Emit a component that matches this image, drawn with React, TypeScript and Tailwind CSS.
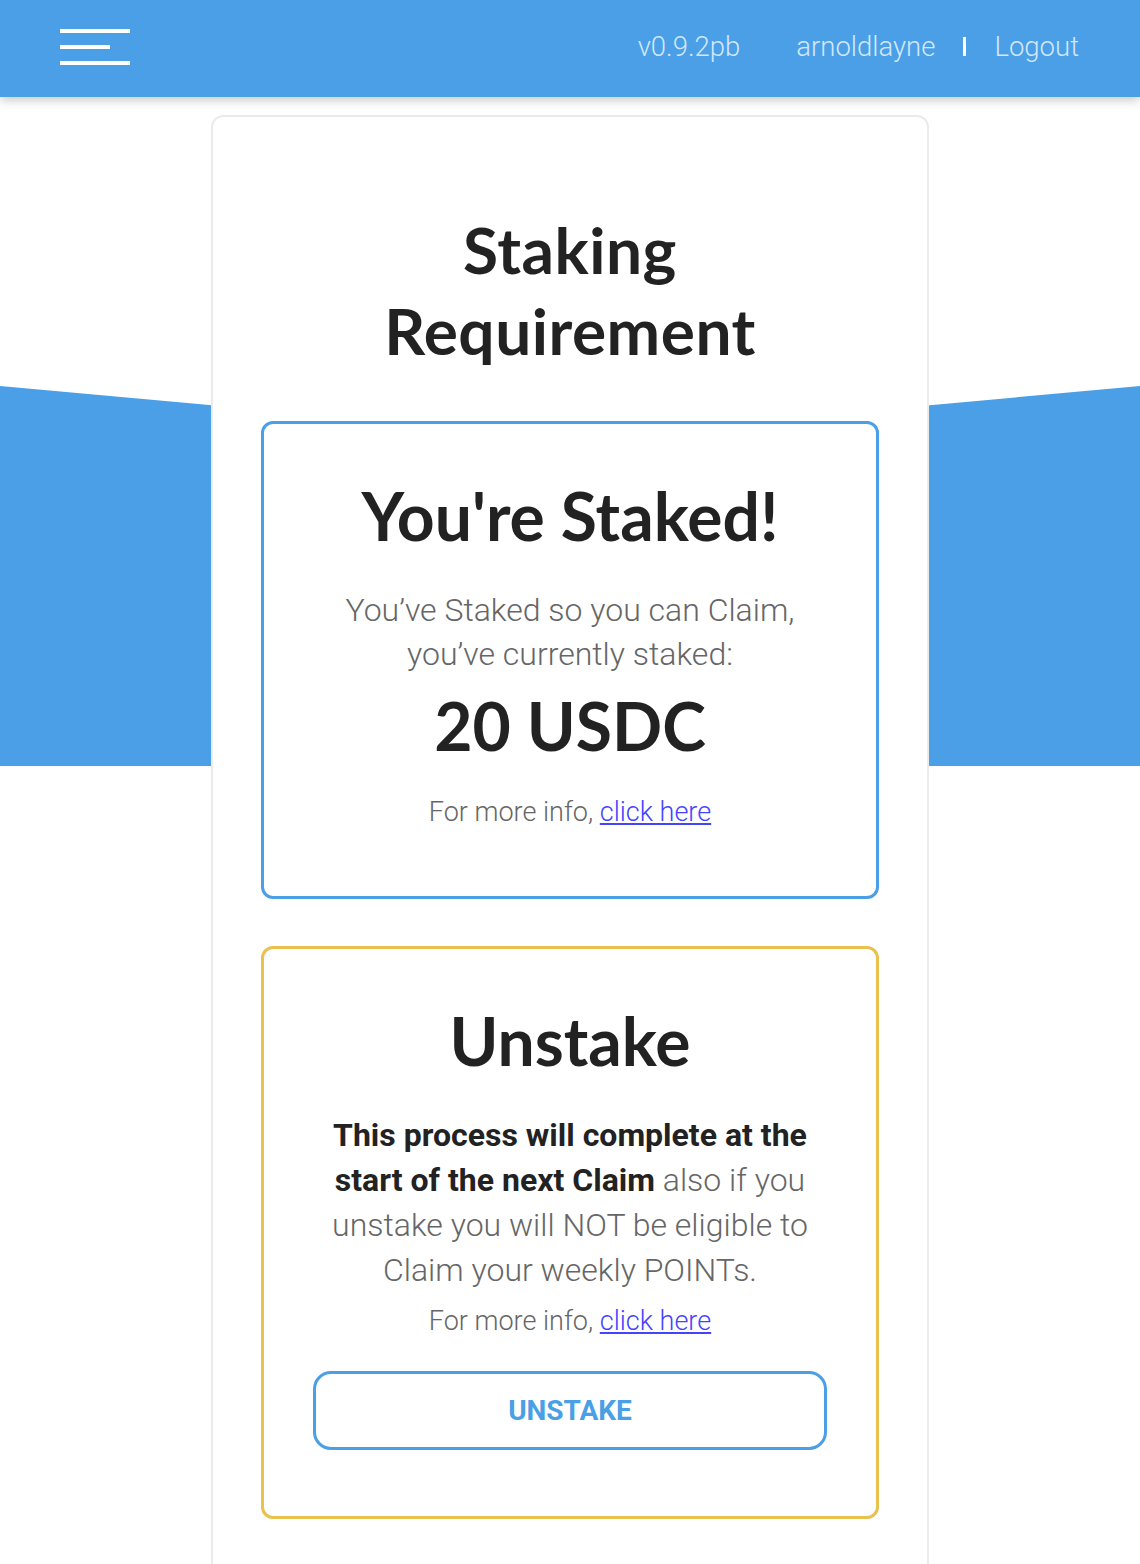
export default function App() {
  return (
    <div className="relative min-h-screen bg-white font-['Roboto',sans-serif] text-[#222]">
      <header className="relative z-20 flex h-[97px] items-center justify-between bg-[#4a9fe6] pb-[4px] pl-[60px] pr-[61px] shadow-[0_3px_10px_rgba(0,0,0,0.22)]">
        <button className="flex flex-col gap-[12px]">
          <span className="block h-[4px] w-[70px] bg-white" />
          <span className="block h-[4px] w-[50px] bg-white" />
          <span className="block h-[4px] w-[70px] bg-white" />
        </button>
        <nav className="flex items-center text-[27.5px] font-light text-[#d2e7fb]">
          <span>v0.9.2pb</span>
          <span className="ml-[56px]">arnoldlayne</span>
          <span className="mx-[28px] block h-[19px] w-[3px] bg-white" />
          <span>Logout</span>
        </nav>
      </header>

      {/* angled blue band behind the card */}
      <div className="absolute left-0 right-0 top-[386px] z-0 h-[380px] bg-[#4a9fe6] [clip-path:polygon(0_0,50%_52px,100%_0,100%_100%,0_100%)]" />

      <main className="relative z-10 mx-auto mt-[18px] w-[718px] rounded-[12px] border-2 border-[#ebebeb] bg-white px-[48px] pb-[60px] pt-[92px]">
        <h1 className="text-center font-['Lato',sans-serif] text-[64px] font-bold leading-[81px] tracking-[0.5px] text-[#222]">
          Staking
          <br />
          Requirement
        </h1>

        <section className="mt-[50px] rounded-[12px] border-[3px] border-[#4a9fe6] px-[30px] pb-[64px] pt-[52px] text-center">
          <h2 className="font-['Lato',sans-serif] text-[66px] font-bold leading-[80px] text-[#222]">
            You're Staked!
          </h2>
          <p className="mt-[32px] text-[32px] font-light leading-[44px] text-[#666]">
            You’ve Staked so you can Claim,
            <br />
            you’ve currently staked:
          </p>
          <p className="mt-[10px] font-['Lato',sans-serif] text-[66px] font-bold leading-[80px] text-[#222]">
            20 USDC
          </p>
          <p className="mt-[26px] text-[27px] font-light leading-[40px] text-[#666]">
            For more info,{' '}
            <a href="#" className="text-[#4444ff] underline">
              click here
            </a>
          </p>
        </section>

        <section className="mt-[47px] rounded-[12px] border-[3px] border-[#e9c14f] px-[49px] pb-[66px] pt-[52px] text-center">
          <h2 className="font-['Lato',sans-serif] text-[66px] font-bold leading-[80px] text-[#222]">
            Unstake
          </h2>
          <p className="mt-[32px] text-[32px] font-light leading-[45px] text-[#666]">
            <strong className="font-bold text-[#222]">
              This process will complete at the start of the next Claim
            </strong>{' '}
            also if you unstake you will NOT be eligible to Claim your weekly POINTs.
          </p>
          <p className="mt-[8px] text-[27px] font-light leading-[40px] text-[#666]">
            For more info,{' '}
            <a href="#" className="text-[#4444ff] underline">
              click here
            </a>
          </p>
          <button className="mt-[30px] flex h-[79px] w-full items-center justify-center rounded-[18px] border-[3px] border-[#4a9fe6] text-[28px] font-bold text-[#4a9fe6]">
            UNSTAKE
          </button>
        </section>
      </main>
    </div>
  );
}
